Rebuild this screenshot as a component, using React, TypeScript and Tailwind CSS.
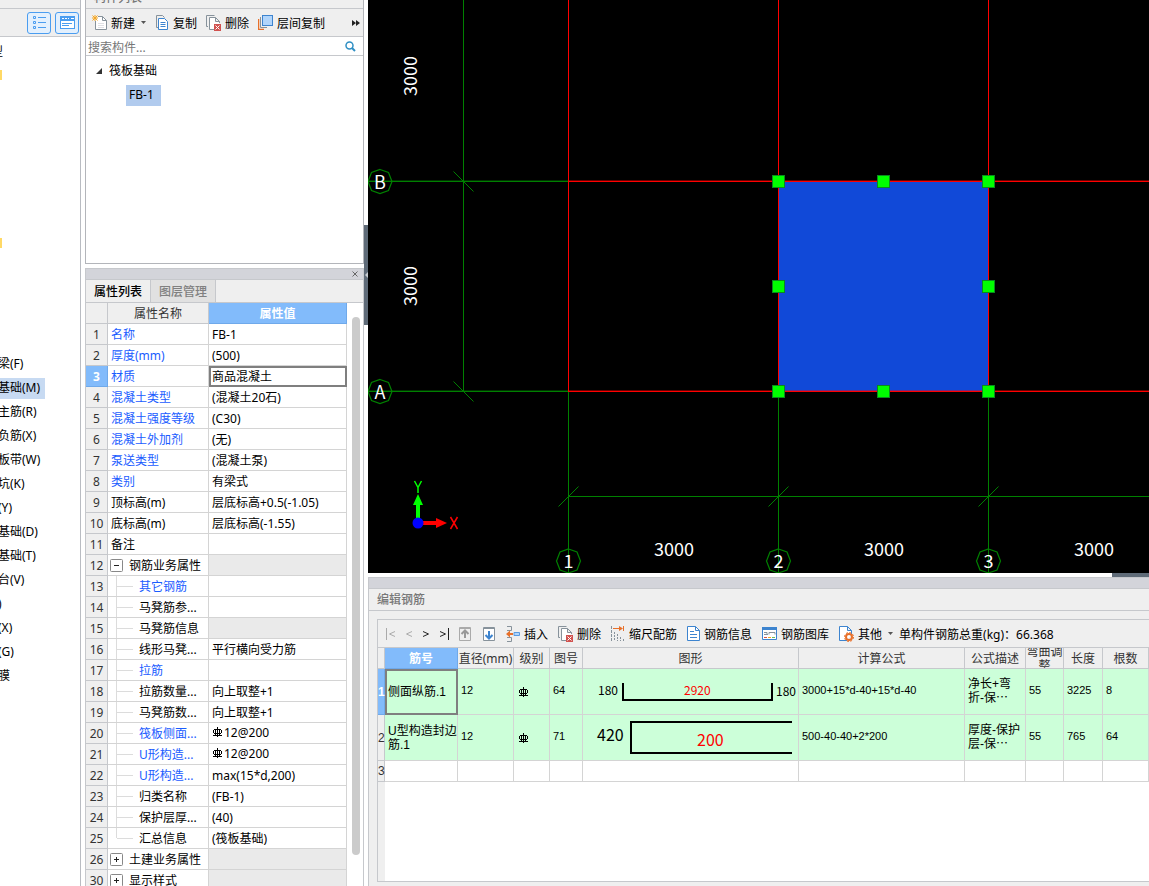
import React from "react";
import clsx from "clsx";

const navItems = [
  { label: "梁(F)" },
  { label: "基础(M)", active: true },
  { label: "主筋(R)" },
  { label: "负筋(X)" },
  { label: "板带(W)" },
  { label: "坑(K)" },
  { label: "(Y)" },
  { label: "基础(D)" },
  { label: "基础(T)" },
  { label: "台(V)" },
  { label: ")" },
  { label: "(X)" },
  { label: "(G)" },
  { label: "膜" },
];

type Property = {
  no: number;
  name: string;
  value?: string;
  blue?: boolean;
  kind?: "open" | "closed" | "child" | "last";
  rebar?: boolean;
  disabled?: boolean;
  selected?: boolean;
};

const properties: Property[] = [
  { no: 1, name: "名称", value: "FB-1", blue: true },
  { no: 2, name: "厚度(mm)", value: "(500)", blue: true },
  { no: 3, name: "材质", value: "商品混凝土", blue: true, selected: true },
  { no: 4, name: "混凝土类型", value: "(混凝土20石)", blue: true },
  { no: 5, name: "混凝土强度等级", value: "(C30)", blue: true },
  { no: 6, name: "混凝土外加剂", value: "(无)", blue: true },
  { no: 7, name: "泵送类型", value: "(混凝土泵)", blue: true },
  { no: 8, name: "类别", value: "有梁式", blue: true },
  { no: 9, name: "顶标高(m)", value: "层底标高+0.5(-1.05)" },
  { no: 10, name: "底标高(m)", value: "层底标高(-1.55)" },
  { no: 11, name: "备注" },
  { no: 12, name: "钢筋业务属性", kind: "open", disabled: true },
  { no: 13, name: "其它钢筋", kind: "child", blue: true },
  { no: 14, name: "马凳筋参...", kind: "child" },
  { no: 15, name: "马凳筋信息", kind: "child", disabled: true },
  { no: 16, name: "线形马凳...", value: "平行横向受力筋", kind: "child" },
  { no: 17, name: "拉筋", kind: "child", blue: true },
  { no: 18, name: "拉筋数量...", value: "向上取整+1", kind: "child" },
  { no: 19, name: "马凳筋数...", value: "向上取整+1", kind: "child" },
  { no: 20, name: "筏板侧面...", value: "12@200", kind: "child", blue: true, rebar: true },
  { no: 21, name: "U形构造...", value: "12@200", kind: "child", blue: true, rebar: true },
  { no: 22, name: "U形构造...", value: "max(15*d,200)", kind: "child", blue: true },
  { no: 23, name: "归类名称", value: "(FB-1)", kind: "child" },
  { no: 24, name: "保护层厚...", value: "(40)", kind: "child" },
  { no: 25, name: "汇总信息", value: "(筏板基础)", kind: "last" },
  { no: 26, name: "土建业务属性", kind: "closed", disabled: true },
  { no: 30, name: "显示样式", kind: "closed", disabled: true },
];

const rebarColumns = [
  { title: "直径(mm)", width: "w-14" },
  { title: "级别", width: "w-9" },
  { title: "图号", width: "w-[33px]" },
  { title: "图形", width: "w-[216px]" },
  { title: "计算公式", width: "w-[166px]" },
  { title: "公式描述", width: "w-[61px]" },
  { title: "弯曲调整", width: "w-[38px]" },
  { title: "长度", width: "w-[39px]" },
  { title: "根数", width: "" },
];

const RebarMark = ({ className }: { className?: string }) => (
  <svg width="10" height="10" viewBox="0 0 10 10" fill="none" stroke="currentColor" className={className}>
    <path d="M5.5 0V10M2 2.5H9M1.5 3V6M9.5 3V6M2 6.5H9M3.5 2V8M7.5 2V8M1 8.5H10" />
  </svg>
);

const CopyIcon = () => (
  <svg width="14" height="15" viewBox="0 0 14 15" fill="none">
    <path d="M3 12.5H1.5V.5H7.5L9.5 2.5" stroke="#87929b" />
    <path d="M4 3.5H9.5L12.5 6.5V14.5H3.5V3.5Z" fill="#fff" stroke="#3d84cf" />
    <path d="M5.5 7.5H10.5M5.5 9.5H10.5M5.5 11.5H10.5" stroke="#3d84cf" />
  </svg>
);

const DeleteIcon = () => (
  <svg width="15" height="16" viewBox="0 0 15 16" fill="none">
    <path d="M2 11.5H.5V.5H8.5" stroke="#87929b" />
    <path d="M8 14.5H3.5V2.5H9.5L13.5 6.5V8M9.5 2.5V6.5H13.5" fill="#fff" stroke="#87929b" />
    <path d="M8 9H15V16H8Z" fill="#d1524f" />
    <path d="M9.5 10.5L13.5 14.5M13.5 10.5L9.5 14.5" stroke="#fff" />
  </svg>
);

const NewIcon = () => (
  <svg width="15" height="15" viewBox="0 0 15 15" fill="none">
    <path d="M3.5 6V14.5H14.5V5.5L10.5 1.5H6" fill="#fff" stroke="#87929b" />
    <path d="M10.5 1.5V5.5H14.5" stroke="#87929b" />
    <path d="M6 8.5H12M6 10.5H12M6 12.5H12" stroke="#dfe0e4" />
    <path d="M3 0V6M0 3H6M.5 .5L5.5 5.5M5.5 .5L.5 5.5" stroke="#f5a623" />
  </svg>
);

const LayerCopyIcon = () => (
  <svg width="15" height="15" viewBox="0 0 15 15" fill="none">
    <path d="M.5 4V14.5H6" stroke="#e8702a" strokeWidth="1.500" />
    <path d="M2.500 2V12.500H9" stroke="#87929b" />
    <rect x="4.500" y=".5" width="10" height="10" fill="#b1d5fb" stroke="#3d84cf" />
  </svg>
);

const Caret = () => (
  <svg width="5" height="3" viewBox="0 0 5 3">
    <path d="M0 0H5L2.500 3Z" fill="#555" />
  </svg>
);

const ToolButton = ({ icon, label, caret }: { icon: React.ReactNode; label: string; caret?: boolean }) => (
  <button className="flex items-center gap-1 whitespace-nowrap">
    {icon}
    <span className="pt-[2px]">{label}</span>
    {caret && (
      <span className="ml-[2px]">
        <Caret />
      </span>
    )}
  </button>
);

const NavPanel = () => (
  <nav className="w-[81px] shrink-0 border-r border-[#b9bcc2] overflow-hidden">
    <div className="h-[9px] bg-[#efefef] border-b border-[#c6c8cc]" />
    <div className="h-7 bg-[#efefef] border-b border-[#c6c8cc] flex items-center justify-end gap-1 pr-px">
      <button
        aria-label="列表"
        className="w-6 h-[22px] rounded-[3px] border border-[#4a9df0] bg-[#e3f0fd] flex items-center justify-center"
      >
        <svg width="13" height="13" viewBox="0 0 13 13" fill="none" stroke="#4a9df0">
          <path d="M.5 .5H2.500V2.500H.5ZM.5 5.500H2.500V7.500H.5ZM.5 10.500H2.500V12.500H.5ZM5 1.500H13M5 6.500H13M5 11.500H13" />
        </svg>
      </button>
      <button
        aria-label="卡片"
        className="w-6 h-[22px] rounded-[3px] border border-[#4a9df0] bg-[#e3f0fd] flex items-center justify-center"
      >
        <svg width="15" height="13" viewBox="0 0 15 13" fill="none">
          <rect x=".5" y=".5" width="14" height="12" fill="#fff" stroke="#4a9df0" />
          <path d="M0 0H15V5H0Z" fill="#4a9df0" />
          <path d="M2 2.500H4M5 2.500H7M8 2.500H9M11 2.500H14" stroke="#fff" />
          <path d="M2 7.500H12M2 9.500H9" stroke="#4a9df0" />
        </svg>
      </button>
    </div>
    <div className="h-6 mt-[2px] -ml-[9px] leading-[26px]">型</div>
    <div className="h-6 flex items-center">
      <span className="w-[2px] h-[10px] bg-[#ffd966]" />
    </div>
    <div className="h-36" />
    <div className="h-6 flex items-center">
      <span className="w-[2px] h-[10px] bg-[#ffd966]" />
    </div>
    <div className="h-24 mb-px" />
    <ul>
      {navItems.map((item) => (
        <li key={item.label} className="h-6 flex items-center">
          <button className={clsx("h-[21px] -ml-[2px] whitespace-nowrap", item.active && "bg-[#c7daf2] pr-[5px]")}>
            {item.label}
          </button>
        </li>
      ))}
    </ul>
  </nav>
);

const ComponentPanel = () => (
  <section className="h-[264px] shrink-0 border-x border-b border-[#b3b5ba] flex flex-col">
    <div className="h-[9px] shrink-0 bg-[#efefef] border-b border-[#c6c8cc] overflow-hidden flex items-end">
      <h2 className="pl-2 leading-5 font-medium text-[#777]">构件列表</h2>
    </div>
    <div className="h-7 shrink-0 bg-[#efefef] border-b border-[#c6c8cc] flex items-center pl-[6px] pr-[3px]">
      <div className="flex gap-[9px] grow">
        <ToolButton icon={<NewIcon />} label="新建" caret />
        <ToolButton icon={<CopyIcon />} label="复制" />
        <ToolButton icon={<DeleteIcon />} label="删除" />
        <ToolButton icon={<LayerCopyIcon />} label="层间复制" />
      </div>
      <button aria-label="更多">
        <svg width="8" height="6" viewBox="0 0 8 6">
          <path d="M0 0L4 3L0 6ZM4 0L8 3L4 6Z" fill="#222" />
        </svg>
      </button>
    </div>
    <div className="h-[19px] shrink-0 border-b border-[#c6c8cc] flex items-center pl-[2px] pr-[7px]">
      <input
        aria-label="搜索构件"
        placeholder="搜索构件..."
        className="grow h-[18px] pt-[2px] outline-none placeholder:text-[#777]"
      />
      <svg width="11" height="11" viewBox="0 0 11 11" fill="none" stroke="#2f8fc4">
        <circle cx="4.500" cy="4.500" r="3.500" strokeWidth="1.500" />
        <path d="M7 7L10 10" strokeWidth="2" />
      </svg>
    </div>
    <div className="pt-[3px]">
      <button className="h-6 pl-[10px] flex items-center gap-[7px]">
        <svg width="6" height="6" viewBox="0 0 6 6">
          <path d="M6 0V6H0Z" fill="#333" />
        </svg>
        筏板基础
      </button>
      <div className="pl-10 h-6 flex items-center">
        <button className="h-[21px] px-[3px] w-[35px] bg-[#b1cbee] text-left whitespace-nowrap">FB-1</button>
      </div>
    </div>
  </section>
);

const PropertyName = ({ item }: { item: Property }) => {
  if (item.kind === "open" || item.kind === "closed") {
    return (
      <span className="flex items-center gap-[6px] h-5 pl-[2px]">
        <button aria-label={item.name} className="size-[13px]">
          <svg width="13" height="13" viewBox="0 0 13 13" fill="none">
            <rect x=".5" y=".5" width="12" height="12" rx="1" fill="#fff" stroke="#888" />
            <path d={item.kind === "open" ? "M4 6.500H9" : "M4 6.500H9M6.500 4V9"} stroke="#222" />
          </svg>
        </button>
        <span className="pt-[2px]">{item.name}</span>
      </span>
    );
  }
  if (item.kind) {
    return (
      <span className="flex items-center h-5 pl-2">
        <span
          className={clsx("w-px bg-[#dcdcdc] self-start", item.kind === "last" ? "h-[10px]" : "h-5")}
        />
        <span className="w-4 h-px bg-[#dcdcdc] mr-[6px]" />
        <span className="pt-[2px]">{item.name}</span>
      </span>
    );
  }
  return <span className="block pl-[3px] pt-[2px]">{item.name}</span>;
};

const PropertyPanel = () => (
  <section className="grow min-h-0 mt-1 border-x border-[#c6c8cc] flex flex-col">
    <div className="h-3 shrink-0 bg-[#d3d4da] border-y border-[#c6c8cc] flex items-center justify-end pr-[5px]">
      <button aria-label="关闭">
        <svg width="6" height="6" viewBox="0 0 6 6" stroke="#666">
          <path d="M.5 .5L5.500 5.500M5.500 .5L.5 5.500" />
        </svg>
      </button>
    </div>
    <div role="tablist" className="h-[23px] shrink-0 bg-[#efefef] border-b border-[#c6c8cc] flex font-medium">
      <button role="tab" aria-selected="true" className="w-[65px] pt-[2px] border-r border-[#c6c8cc]">
        属性列表
      </button>
      <button
        role="tab"
        aria-selected="false"
        className="w-[65px] pt-[2px] border-r border-[#c6c8cc] bg-[#e1e1e1] text-[#808080]"
      >
        图层管理
      </button>
    </div>
    <div className="flex grow min-h-0 overflow-hidden">
      <div className="grow">
        <table className="w-full table-fixed border-separate border-spacing-0">
          <thead>
            <tr className="h-[21px] leading-[18px] bg-[#efefef] text-[#333]">
              <th className="w-[22px] p-0 border-r border-b border-[#c6c8cc]" />
              <th className="w-[101px] p-0 pt-[2px] border-r border-b border-[#c6c8cc] font-normal">属性名称</th>
              <th className="p-0 pt-[2px] border-r border-b border-[#6fa9ea] bg-[#82bbfb] text-white">属性值</th>
            </tr>
          </thead>
          <tbody>
            {properties.map((item) => (
              <tr key={item.no} className="h-[21px] leading-[18px]">
                <th
                  className={clsx(
                    "p-0 pt-[2px] border-r border-b",
                    item.selected
                      ? "bg-[#82bbfb] border-[#6fa9ea] text-white font-bold"
                      : "bg-[#efefef] border-[#c6c8cc] text-[#333] font-normal",
                  )}
                >
                  {item.no}
                </th>
                <td
                  className={clsx(
                    "p-0 border-r border-b border-[#d4d4d4] whitespace-nowrap",
                    item.blue && "text-[#1a5cff]",
                  )}
                >
                  <PropertyName item={item} />
                </td>
                <td
                  className={clsx(
                    "p-0 pl-[3px] border-r border-b border-[#d4d4d4] whitespace-nowrap",
                    item.disabled && "bg-[#eaeaea]",
                    item.selected && "outline-2 -outline-offset-2 outline-[#7f7f7f]",
                    !item.rebar && "pt-[2px]",
                  )}
                >
                  {item.rebar && <RebarMark className="inline-block mr-[2px] mb-1" />}
                  {item.value}
                </td>
              </tr>
            ))}
          </tbody>
        </table>
      </div>
      <div className="w-4 shrink-0 pl-[5px] pt-[14px] pb-[31px]">
        <div className="w-2 h-full rounded bg-[#cbcbcb]" />
      </div>
    </div>
  </section>
);

const handles = [
  [410, 181],
  [515, 181],
  [620, 181],
  [410, 286],
  [620, 286],
  [410, 391],
  [515, 391],
  [620, 391],
];

const Drawing = () => (
  <svg
    width="100%"
    height="100%"
    fill="none"
    className="block bg-black font-['Noto_Sans_CJK_SC',sans-serif] text-[18px]"
  >
    {/* dimension lines */}
    <g fill="#008000">
      <rect x="95" y="0" width="1" height="391" />
      <rect x="0" y="180.600" width="200" height="1.400" />
      <rect x="0" y="390.600" width="200" height="1.400" />
      <rect x="200" y="391" width="1" height="182" />
      <rect x="410" y="391" width="1" height="182" />
      <rect x="620" y="391" width="1" height="182" />
      <rect x="200" y="496" width="100%" height="1" />
    </g>
    <g stroke="#008000">
      <path d="M85.500 171.500L105.500 191.500M85.500 381.500L105.500 401.500" />
      <path d="M190.500 506.500L210.500 486.500M400.500 506.500L420.500 486.500M610.500 506.500L630.500 486.500" />
    </g>

    <rect x="411" y="182" width="209" height="209" fill="#1149d8" />

    {/* axis grid */}
    <g fill="#ff0000">
      <rect x="200" y="0" width="1" height="391" />
      <rect x="410" y="0" width="1" height="391" />
      <rect x="620" y="0" width="1" height="391" />
      <rect x="200" y="180.600" width="100%" height="1.400" />
      <rect x="200" y="390.600" width="100%" height="1.400" />
    </g>

    {handles.map(([x, y]) => (
      <rect key={`${x}-${y}`} x={x - 5.5} y={y - 5.5} width="12" height="12" fill="#00ff00" stroke="#0a8a1e" />
    ))}

    {/* axis labels */}
    {[
      { label: "B", x: 12, y: 181.5 },
      { label: "A", x: 12, y: 391.5 },
      { label: "1", x: 200.5, y: 561 },
      { label: "2", x: 410.5, y: 561 },
      { label: "3", x: 620.5, y: 561 },
    ].map((axis) => (
      <g key={axis.label} transform={`translate(${axis.x} ${axis.y})`}>
        <path
          d="M0 -12L8.500 -9L12 0L8.500 9L0 12L-8.500 9L-12 0L-8.500 -9Z"
          stroke="#008000"
          strokeWidth="1.200"
        />
        <text y="7" textAnchor="middle" fill="#fff">
          {axis.label}
        </text>
      </g>
    ))}
    <g fill="#fff" textAnchor="middle">
      <text x="306" y="556">3000</text>
      <text x="516" y="556">3000</text>
      <text x="726" y="556">3000</text>
      <text transform="translate(49 76) rotate(-90)">3000</text>
      <text transform="translate(49 286) rotate(-90)">3000</text>
    </g>

    {/* coordinate symbol */}
    <path d="M50 520V503" stroke="#00ff00" strokeWidth="4" />
    <path d="M45 505L50 494L55 505Z" fill="#00ff00" />
    <path d="M55 523H68" stroke="#ff0000" strokeWidth="4" />
    <path d="M68 518L79 523L68 528Z" fill="#ff0000" />
    <circle cx="50" cy="523" r="5.500" fill="#0000ff" />
    <path d="M46.500 481L50 487.500L53.500 481M50 487V493" stroke="#00ff00" strokeWidth="1.500" />
    <path d="M82.500 517L89.500 529M89.500 517L82.500 529" stroke="#ff0000" strokeWidth="1.500" />
  </svg>
);

const RebarToolbar = () => (
  <div className="h-7 shrink-0 border-b border-[#c6c8cc] flex items-center pl-2 gap-[10px] whitespace-nowrap">
    <div className="flex items-center gap-[11px] w-[62px]">
      {[
        { label: "首条", path: "M.5 0V12M9 3.500L3.500 6L9 8.500", off: true },
        { label: "上一条", path: "M6 3.500L.5 6L6 8.500", off: true },
        { label: "下一条", path: "M0 3.500L5.500 6L0 8.500" },
        { label: "末条", path: "M0 3.500L5.500 6L0 8.500M8.500 0V12" },
      ].map((nav) => (
        <button key={nav.label} aria-label={nav.label}>
          <svg
            width={nav.path.includes("V12") ? 9 : 6}
            height="12"
            fill="none"
            stroke={nav.off ? "#aaa" : "#222"}
          >
            <path d={nav.path} />
          </svg>
        </button>
      ))}
    </div>
    <div className="flex items-center gap-3 px-px">
      <button aria-label="上移">
        <svg width="12" height="14" viewBox="0 0 12 14" fill="none">
          <path d="M.5 .5H11.500V13.500H.5Z" fill="#efefef" stroke="#aaa" />
          <path d="M1 1.500H11" stroke="#aaa" />
          <path d="M6 11V5M2.500 7L6 3.500L9.500 7" stroke="#999" strokeWidth="2" />
        </svg>
      </button>
      <button aria-label="下移">
        <svg width="12" height="14" viewBox="0 0 12 14" fill="none">
          <path d="M.5 .5H11.500V13.500H.5Z" fill="#fff" stroke="#87929b" />
          <path d="M1 1.500H11" stroke="#87929b" />
          <path d="M6 4V10M2.500 8L6 11.500L9.500 8" stroke="#3d84cf" strokeWidth="2" />
        </svg>
      </button>
    </div>
    <ToolButton
      label="插入"
      icon={
        <svg width="14" height="16" viewBox="0 0 14 16" fill="none">
          <path d="M1 .5H5.500V4.500H1M1 11.500H5.500V15.500H1" stroke="#87929b" />
          <path d="M0 8L4 4.500V7H7V9H4V11.500Z" fill="#e8702a" />
          <path d="M8 6.500H13.500V9.500H8Z" fill="#b1d5fb" stroke="#5a9be0" />
        </svg>
      }
    />
    <ToolButton label="删除" icon={<DeleteIcon />} />
    <ToolButton
      label="缩尺配筋"
      icon={
        <svg width="14" height="15" viewBox="0 0 14 15" fill="none">
          <path d="M.5 0V15" stroke="#87929b" strokeDasharray="3 1" />
          <path d="M3.500 6V15M6.500 8V15M9.500 11V15M12.500 13V15" stroke="#87929b" strokeDasharray="2 1" />
          <path d="M2 2.500H9M12.500 0V5" stroke="#e8702a" />
          <path d="M8 0L12 2.500L8 5Z" fill="#e8702a" />
        </svg>
      }
    />
    <ToolButton
      label="钢筋信息"
      icon={
        <svg width="13" height="15" viewBox="0 0 13 15" fill="none">
          <path d="M.5 .5H8.500L12.500 4.500V14.500H.5Z" fill="#fff" stroke="#3d84cf" />
          <path d="M8.500 .5V4.500H12.500M3 5.500H7M3 8.500H10M3 11.500H10" stroke="#3d84cf" />
        </svg>
      }
    />
    <ToolButton
      label="钢筋图库"
      icon={
        <svg width="15" height="13" viewBox="0 0 15 13" fill="none">
          <path d="M.5 .5H14.500V12.500H.5Z" fill="#fff" stroke="#3d84cf" />
          <path d="M0 0H15V3H0Z" fill="#3d84cf" />
          <path d="M2 5.500H5V8M2 7.500H6M7 7.500V5.500H13V7.500" stroke="#87929b" />
          <path d="M2 10.500H5" stroke="#d1524f" />
          <path d="M6 10.500H9" stroke="#f5a623" />
          <path d="M10 10.500H13" stroke="#6abf5b" />
        </svg>
      }
    />
    <ToolButton
      label="其他"
      caret
      icon={
        <svg width="15" height="16" viewBox="0 0 15 16" fill="none">
          <path d="M8 14.500H.5V.5H8.500L12.500 4.500V8M8.500 .5V4.500H12.500" fill="#fff" stroke="#3d84cf" />
          <circle cx="10" cy="11" r="3" stroke="#e8702a" strokeWidth="2" />
          <circle cx="10" cy="11" r="4.500" stroke="#e8702a" strokeDasharray="2 1.500" />
        </svg>
      }
    />
    <span className="-ml-1 pt-[2px]">单构件钢筋总重(kg)：66.368</span>
  </div>
);

const StraightShape = () => (
  <svg width="215" height="45" fill="none" className="block">
    <path d="M40 14V31H189V14" stroke="#000" strokeWidth="2" />
    <text x="15" y="26" fill="#000" fontSize="12">180</text>
    <text x="101" y="26" fill="#f00" fontSize="12">2920</text>
    <text x="193" y="27" fill="#000" fontSize="12">180</text>
  </svg>
);

const HookShape = () => (
  <svg width="215" height="45" fill="none" className="block">
    <path d="M209 7H48V38H209" stroke="#000" strokeWidth="2" />
    <text x="14" y="26" fill="#000" fontSize="16">420</text>
    <text x="114" y="31" fill="#f00" fontSize="16">200</text>
  </svg>
);

const rebars = [
  {
    name: "侧面纵筋.1",
    diameter: "12",
    shapeNo: "64",
    shape: <StraightShape />,
    formula: "3000+15*d-40+15*d-40",
    note: ["净长+弯", "折-保⋯"],
    bend: "55",
    length: "3225",
    count: "8",
  },
  {
    name: "U型构造封边筋.1",
    diameter: "12",
    shapeNo: "71",
    shape: <HookShape />,
    formula: "500-40-40+2*200",
    note: ["厚度-保护", "层-保⋯"],
    bend: "55",
    length: "765",
    count: "64",
  },
];

const RebarTable = () => (
  <table className="w-full table-fixed border-separate border-spacing-0 bg-white">
    <thead>
      <tr className="h-[21px] leading-[18px] bg-[#efefef] text-[#333]">
        <th className="w-[7px] p-0 border-r border-b border-[#c6c8cc]" />
        <th className="w-[73px] p-0 pt-[2px] border-r border-b border-[#6fa9ea] bg-[#82bbfb] text-white font-bold">
          筋号
        </th>
        {rebarColumns.map((column) => (
          <th key={column.title} className={clsx("p-0 border-r border-b border-[#c6c8cc] font-normal", column.width)}>
            <div className="h-5 pt-[2px] overflow-hidden flex items-center justify-center leading-[14px]">
              {column.title}
            </div>
          </th>
        ))}
      </tr>
    </thead>
    <tbody className="font-['Liberation_Sans','Noto_Sans_CJK_SC',sans-serif] [&_td]:p-0 [&_td]:pl-[3px] [&_td]:border-r [&_td]:border-b [&_td]:border-[#d4d4d4]">
      {rebars.map((rebar, i) => (
        <tr key={rebar.name} className="h-[46px] bg-[#ccffd9] text-[11px] leading-[14px]">
          <th
            className={clsx(
              "p-0 border-r border-b text-xs",
              i === 0
                ? "bg-[#82bbfb] border-[#6fa9ea] text-white font-bold"
                : "bg-[#efefef] border-[#c6c8cc] text-[#333] font-normal",
            )}
          >
            {i + 1}
          </th>
          <td className={clsx("text-xs leading-[14px]", i === 0 && "outline-2 -outline-offset-2 outline-[#7f7f7f]")}>
            {rebar.name}
          </td>
          <td className="pb-1!">{rebar.diameter}</td>
          <td>
            <RebarMark className="ml-px" />
          </td>
          <td className="pb-1!">{rebar.shapeNo}</td>
          <td className="pl-0! font-['Noto_Sans_CJK_SC',sans-serif]">{rebar.shape}</td>
          <td className="pb-1!">{rebar.formula}</td>
          <td className="pb-[2px]! text-xs leading-[14px] whitespace-nowrap">
            {rebar.note[0]}
            <br />
            {rebar.note[1]}
          </td>
          <td className="pb-1!">{rebar.bend}</td>
          <td className="pb-1!">{rebar.length}</td>
          <td className="pb-1!">{rebar.count}</td>
        </tr>
      ))}
      <tr className="h-[21px]">
        <th className="p-0 border-r border-b border-[#c6c8cc] bg-[#efefef] text-[#333] font-normal">3</th>
        <td />
        {rebarColumns.map((column) => (
          <td key={column.title} />
        ))}
      </tr>
    </tbody>
  </table>
);

const RebarPanel = () => (
  <section className="h-[309px] shrink-0 bg-[#efefef] border-l border-[#c6c8cc] flex flex-col">
    <div className="h-3 shrink-0 bg-[#d3d4da] border-y border-[#c6c8cc]" />
    <h2 className="h-[22px] shrink-0 pl-2 leading-[22px] font-medium text-[#777] border-b border-[#c6c8cc]">
      编辑钢筋
    </h2>
    <div className="grow mt-2 ml-2 mb-1 border-l border-y border-[#c6c8cc] flex flex-col overflow-hidden">
      <RebarToolbar />
      <RebarTable />
      <div className="grow bg-white flex">
        <div className="w-[7px] bg-[#efefef]" />
      </div>
    </div>
  </section>
);

const App = () => {
  return (
    <div className="h-screen overflow-hidden flex bg-white text-black text-xs font-['Noto_Sans','Noto_Sans_CJK_SC',sans-serif]">
      <NavPanel />
      <div className="w-[279px] ml-1 shrink-0 flex flex-col">
        <ComponentPanel />
        <PropertyPanel />
      </div>
      <div className="w-1 shrink-0 pt-[225px]">
        <div className="h-[100px] bg-[#5f6b78] flex items-center justify-end">
          <svg width="3" height="6" viewBox="0 0 3 6">
            <path d="M3 0V6L0 3Z" fill="#c9cdd2" />
          </svg>
        </div>
      </div>
      <main className="grow min-w-0 flex flex-col">
        <div className="grow min-h-0">
          <Drawing />
        </div>
        <div className="h-1 shrink-0 flex justify-end">
          <div className="w-[37px] bg-[#5f6b78]" />
        </div>
        <RebarPanel />
      </main>
    </div>
  );
};

export default App;
